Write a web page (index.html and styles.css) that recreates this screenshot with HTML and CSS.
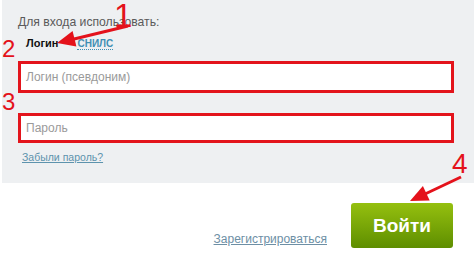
FILE: index.html
```html
<!DOCTYPE html>
<html lang="ru">
<head>
<meta charset="utf-8">
<title>Вход</title>
<link rel="stylesheet" href="styles.css">
</head>
<body>
<div class="page">
  <div class="panel">
    <div class="title">Для входа использовать:</div>
    <div class="tabs">
      <span class="tab active">Логин</span>
      <a class="tab link">СНИЛС</a>
    </div>
    <div class="field"><span class="placeholder">Логин (псевдоним)</span></div>
    <div class="field field2"><span class="placeholder">Пароль</span></div>
    <a class="forgot">Забыли пароль?</a>
  </div>
  <div class="bottom">
    <a class="register">Зарегистрироваться</a>
    <div class="btn">Войти</div>
  </div>
  <svg class="overlay" width="474" height="253" viewBox="0 0 474 253">
    <g fill="#e4121b" stroke="none">
      <line x1="128" y1="26" x2="72" y2="39.5" stroke="#e4121b" stroke-width="3"/>
      <polygon points="57,43 72.6,31 76.4,46.6"/>
      <line x1="461" y1="177" x2="424" y2="194.5" stroke="#e4121b" stroke-width="3"/>
      <polygon points="410,201 422.9,186.1 429.7,200.5"/>
      <text x="114" y="27" class="num n1">1</text>
      <text x="2" y="57" class="num n2">2</text>
      <text x="2" y="110" class="num n2">3</text>
      <text x="452" y="173" class="num n4">4</text>
    </g>
  </svg>
</div>
</body>
</html>
```

FILE: styles.css
```css
* { box-sizing: border-box; }
html, body { margin: 0; padding: 0; background: #fff; }
body { font-family: "Liberation Sans", Arial, sans-serif; }
.page { position: relative; width: 474px; height: 253px; overflow: hidden; }
.panel {
  margin-left: 2px;
  height: 183px;
  background: #eef0f2;
  padding: 15px 20px 0 16px;
}
.title { font-size: 12.2px; line-height: 15px; color: #5a5a5a; }
.tabs { margin-top: 7px; height: 17px; display: flex; gap: 19px; font-size: 11px; line-height: 13px; padding-left: 8px; }
.tab.active { font-weight: bold; color: #111; }
.tab.link { font-weight: bold; font-size: 10px; color: #3f8fb4; border-bottom: 1px dotted #3f8fb4; height: 13px; }
.field {
  margin-top: 7px;
  height: 32px;
  background: #fff;
  border: 3px solid #e3141c;
  display: flex;
  align-items: center;
  padding-left: 5px;
}
.field2 { margin-top: 20px; height: 30px; width: 436px; }
.placeholder { font-size: 12px; color: #9a9a9a; }
.forgot { display: inline-block; margin-top: 8px; margin-left: 4px; font-size: 10.5px; line-height: 13px; color: #5d93ad; text-decoration: underline; }
.bottom { display: flex; justify-content: flex-end; align-items: flex-end; gap: 24px; padding-right: 21px; margin-top: 20px; }
.register { font-size: 12px; line-height: 14px; color: #6d8fa5; text-decoration: underline; margin-bottom: 2px; }
.btn {
  width: 102px; height: 45px;
  border-radius: 3px;
  background: linear-gradient(#95c00f, #5e8e00);
  color: #fff; font-weight: bold; font-size: 19px;
  display: flex; align-items: center; justify-content: center;
}
.overlay { position: absolute; left: 0; top: 0; pointer-events: none; }
.num { font-family: "Liberation Sans", Arial, sans-serif; }
.n1 { font-size: 33px; }
.n2 { font-size: 24px; }
.n4 { font-size: 28px; }
```
